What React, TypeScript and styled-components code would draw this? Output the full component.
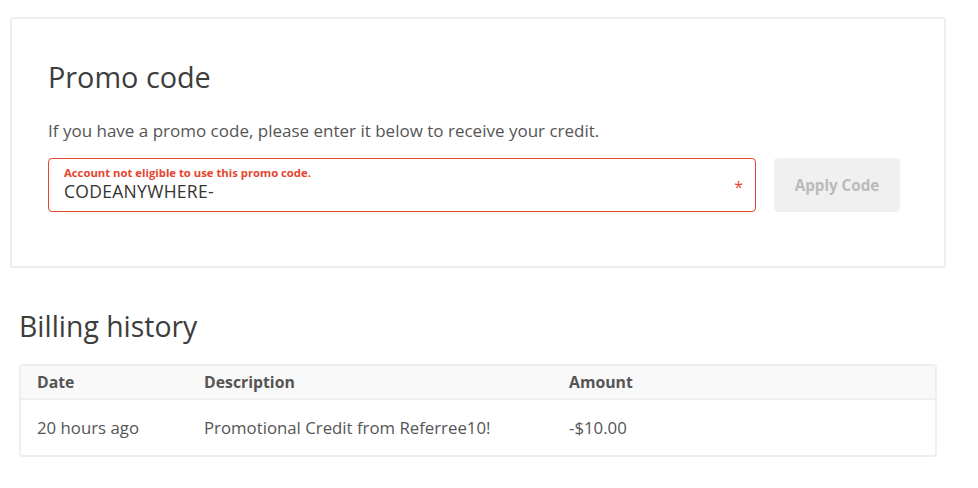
import React from "react";
import styled, { createGlobalStyle } from "styled-components";

const Global = createGlobalStyle`
  html, body { margin: 0; padding: 0; background: #fff; }
  body { font-family: "Open Sans", Lato, sans-serif; color: #4a4a4a; }
  * { box-sizing: border-box; }
`;

const Page = styled.div`
  width: 978px;
  padding: 17px 32px 0 10px;
`;

const Card = styled.section`
  border: 2px solid #eeeeee;
  border-radius: 3px;
  padding: 40px 36px 54px 36px;
  height: 251px;
`;

const Title = styled.h2`
  margin: 0;
  font-weight: 400;
  font-size: 28.8px;
  line-height: 36px;
  color: #3d3d3d;
`;

const Lead = styled.p`
  margin: 26px 0 0;
  font-size: 17px;
  line-height: 20px;
  color: #555;
`;

const FormRow = styled.div`
  display: flex;
  gap: 18px;
  margin-top: 17px;
`;

const Field = styled.label`
  position: relative;
  flex: 0 0 708px;
  height: 54px;
  border: 1px solid #e5452f;
  border-radius: 4px;
  padding: 7px 15px 0;
  display: flex;
  flex-direction: column;
`;

const ErrorText = styled.span`
  font-size: 11.3px;
  font-weight: 700;
  color: #e5452f;
  line-height: 14px;
`;

const Value = styled.span`
  font-size: 17.5px;
  letter-spacing: 0.3px;
  color: #333;
  line-height: 20px;
  margin-top: 1px;
`;

const Required = styled.span`
  position: absolute;
  right: 12px;
  top: 18px;
  color: #e5452f;
  font-size: 16px;
  line-height: 20px;
`;

const ApplyButton = styled.button`
  width: 126px;
  height: 54px;
  border: none;
  border-radius: 4px;
  background: #f0f0f0;
  color: #bababa;
  font-family: inherit;
  font-weight: 700;
  font-size: 15.2px;
`;

const Section = styled.section`
  padding: 40px 0 0 9px;
`;

const Heading = styled.h2`
  margin: 0;
  font-weight: 400;
  font-size: 28.4px;
  line-height: 36px;
  color: #3d3d3d;
`;

const TableBox = styled.div`
  margin-top: 20px;
  width: 918px;
  border: 2px solid #eeeeee;
  border-radius: 4px;
  overflow: hidden;
`;

const Row = styled.div<{ $head?: boolean }>`
  display: grid;
  grid-template-columns: 167px 365px 1fr;
  padding-left: 16px;
  align-items: center;
  height: ${(p) => (p.$head ? "34px" : "55px")};
  background: ${(p) => (p.$head ? "#f9f9f9" : "#fff")};
  border-bottom: ${(p) => (p.$head ? "2px solid #efefef" : "none")};
  font-size: ${(p) => (p.$head ? "15.8px" : "16.8px")};
  font-weight: ${(p) => (p.$head ? 700 : 400)};
  color: #555;
`;

export default function App() {
  return (
    <Page>
      <Global />
      <Card>
        <Title>Promo code</Title>
        <Lead>If you have a promo code, please enter it below to receive your credit.</Lead>
        <FormRow>
          <Field>
            <ErrorText>Account not eligible to use this promo code.</ErrorText>
            <Value>CODEANYWHERE-</Value>
            <Required>*</Required>
          </Field>
          <ApplyButton>Apply Code</ApplyButton>
        </FormRow>
      </Card>
      <Section>
        <Heading>Billing history</Heading>
        <TableBox>
          <Row $head>
            <span>Date</span>
            <span>Description</span>
            <span>Amount</span>
          </Row>
          <Row>
            <span>20 hours ago</span>
            <span>Promotional Credit from Referree10!</span>
            <span>-$10.00</span>
          </Row>
        </TableBox>
      </Section>
    </Page>
  );
}
